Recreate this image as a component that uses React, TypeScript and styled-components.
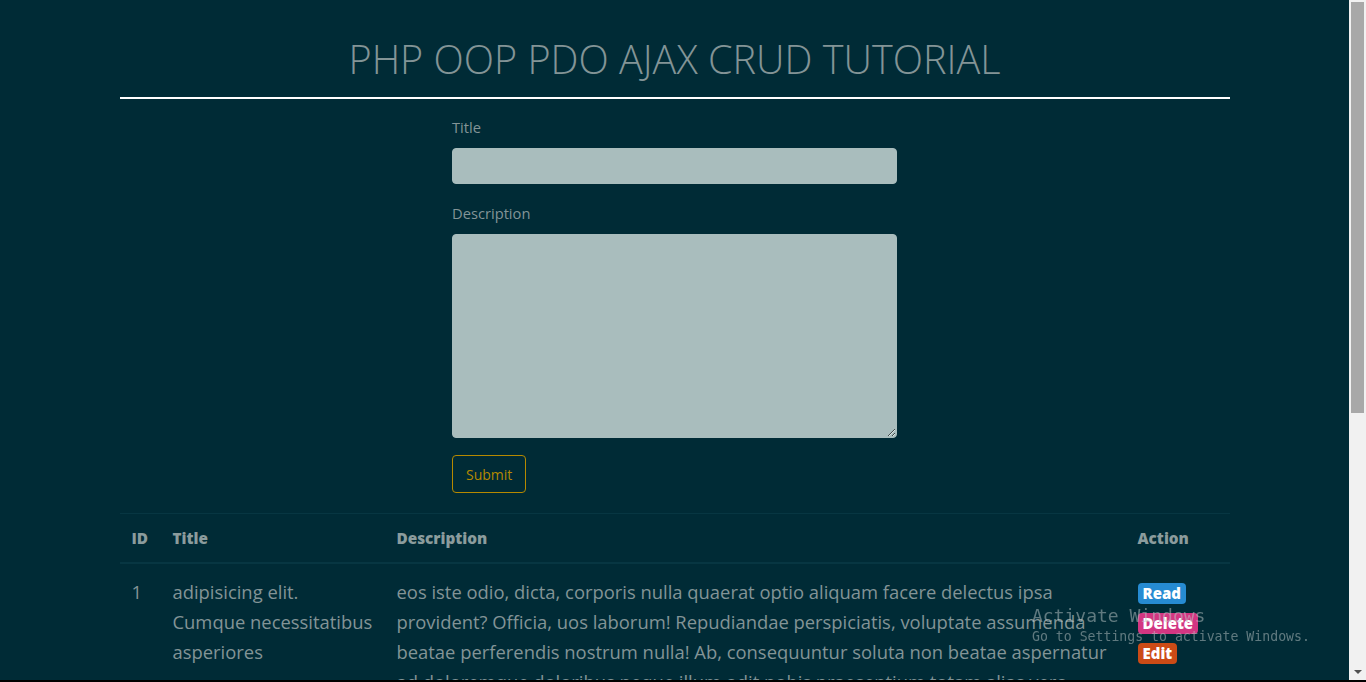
import React from "react";
import styled, { createGlobalStyle } from "styled-components";

const GlobalStyle = createGlobalStyle`
  html, body {
    margin: 0;
    padding: 0;
    overflow: hidden;
    background: #002b36;
  }
  body {
    font-family: "Open Sans", "Noto Sans", sans-serif;
    color: #839496;
  }
  * { box-sizing: border-box; }
`;

const Screen = styled.div`
  display: flex;
  flex-direction: column;
  height: 100vh;
`;

const Viewport = styled.div`
  flex: 1;
  min-height: 0;
  display: flex;
`;

const Page = styled.div`
  flex: 1;
  min-width: 0;
  overflow: hidden;
  background: #002b36;
`;

const BottomEdge = styled.div`
  height: 2px;
  background: #000;
`;

const Scrollbar = styled.div`
  width: 17px;
  background: #f1f1f1;
  display: flex;
  flex-direction: column;
  align-items: center;
  padding-top: 2px;
`;

const Thumb = styled.div`
  width: 13px;
  height: 411px;
  background: #a8a8a8;
`;

const Track = styled.div`
  flex: 1;
`;

const ArrowBox = styled.div`
  height: 17px;
  width: 17px;
  display: flex;
  align-items: center;
  justify-content: center;
`;

const ArrowDown = styled.div`
  width: 0;
  height: 0;
  border-left: 4px solid transparent;
  border-right: 4px solid transparent;
  border-top: 4px solid #505050;
`;

const Container = styled.div`
  width: 1110px;
  margin: 0 auto;
`;

const Heading = styled.h1`
  margin: 0;
  padding-top: 35px;
  text-align: center;
  font-weight: 300;
  font-size: 39.6px;
  line-height: 48px;
  color: #839496;
`;

const Rule = styled.hr`
  margin: 14px 0 0;
  border: 0;
  height: 2px;
  background: #ffffff;
`;

const FormCol = styled.form`
  width: 445px;
  margin: 0 auto;
  padding-top: 19px;
`;

const Group = styled.div`
  margin-bottom: 20px;
`;

const Label = styled.label`
  display: block;
  font-size: 14.7px;
  line-height: 18px;
  margin-bottom: 12px;
  color: #839496;
`;

const Input = styled.input`
  display: block;
  width: 100%;
  height: 36px;
  border: 1px solid #a9bdbd;
  border-radius: 4px;
  background: #a9bdbd;
  font-family: inherit;
  font-size: 15px;
  padding: 6px 12px;
`;

const TextArea = styled.textarea`
  display: block;
  width: 100%;
  height: 204px;
  border: 1px solid #a9bdbd;
  border-radius: 4px;
  background: #a9bdbd;
  font-family: inherit;
  font-size: 15px;
  padding: 6px 12px;
`;

const SubmitButton = styled.button`
  margin-top: -3px;
  height: 38px;
  padding: 0 13px;
  border: 1px solid #b58900;
  border-radius: 4px;
  background: transparent;
  color: #b58900;
  font-family: inherit;
  font-size: 14px;
`;

const Table = styled.table`
  margin-top: 20px;
  width: 100%;
  border-collapse: collapse;
  table-layout: fixed;
`;

const Col = styled.col<{ $w: number }>`
  width: ${(p) => p.$w}px;
`;

const Th = styled.th`
  text-align: left;
  padding: 12px;
  border-top: 1px solid #073642;
  border-bottom: 2px solid #073642;
  font-size: 15.3px;
  line-height: 24px;
  font-weight: 800;
  color: #8b9c9d;
`;

const Td = styled.td`
  vertical-align: top;
  padding: 13px 12px 12px;
  font-size: 18.4px;
  line-height: 30px;
  color: #839496;
`;

const Actions = styled.div`
  display: flex;
  flex-direction: column;
  align-items: flex-start;
  gap: 9px;
  padding-top: 6px;
`;

const Badge = styled.span<{ $bg: string }>`
  display: inline-block;
  background: ${(p) => p.$bg};
  color: #ffffff;
  font-weight: 800;
  font-size: 15px;
  line-height: 15px;
  padding: 3px 5px;
  border-radius: 4px;
`;

const Watermark = styled.div`
  position: fixed;
  left: 1032px;
  top: 604px;
  font-family: "DejaVu Sans Mono", "Liberation Mono", monospace;
  color: rgba(190, 200, 200, 0.5);
  pointer-events: none;
`;

const WatermarkTitle = styled.div`
  font-size: 18px;
  line-height: 24px;
`;

const WatermarkSub = styled.div`
  font-size: 13.2px;
  line-height: 18px;
`;

export default function App() {
  return (
    <Screen>
      <GlobalStyle />
      <Viewport>
        <Page>
          <Container>
            <Heading>PHP OOP PDO AJAX CRUD TUTORIAL</Heading>
            <Rule />
            <FormCol onSubmit={(e) => e.preventDefault()}>
              <Group>
                <Label>Title</Label>
                <Input type="text" />
              </Group>
              <Group>
                <Label>Description</Label>
                <TextArea />
              </Group>
              <SubmitButton type="submit">Submit</SubmitButton>
            </FormCol>
            <Table>
              <colgroup>
                <Col $w={41} />
                <Col $w={224} />
                <Col $w={741} />
                <Col $w={104} />
              </colgroup>
              <thead>
                <tr>
                  <Th>ID</Th>
                  <Th>Title</Th>
                  <Th>Description</Th>
                  <Th>Action</Th>
                </tr>
              </thead>
              <tbody>
                <tr>
                  <Td>1</Td>
                  <Td>
                    adipisicing elit.
                    <br />
                    Cumque necessitatibus asperiores
                  </Td>
                  <Td>
                    eos iste odio, dicta, corporis nulla quaerat optio aliquam facere delectus ipsa
                    provident? Officia, uos laborum! Repudiandae perspiciatis, voluptate assumenda
                    beatae perferendis nostrum nulla! Ab, consequuntur soluta non beatae aspernatur
                    ad doloremque doloribus neque illum odit nobis praesentium totam alias vero
                    dolorum nemo.
                  </Td>
                  <Td>
                    <Actions>
                      <Badge $bg="#268bd2">Read</Badge>
                      <Badge $bg="#d33682">Delete</Badge>
                      <Badge $bg="#cb4b16">Edit</Badge>
                    </Actions>
                  </Td>
                </tr>
              </tbody>
            </Table>
          </Container>
        </Page>
        <Scrollbar>
          <Thumb />
          <Track />
          <ArrowBox>
            <ArrowDown />
          </ArrowBox>
        </Scrollbar>
      </Viewport>
      <BottomEdge />
      <Watermark>
        <WatermarkTitle>Activate Windows</WatermarkTitle>
        <WatermarkSub>Go to Settings to activate Windows.</WatermarkSub>
      </Watermark>
    </Screen>
  );
}
